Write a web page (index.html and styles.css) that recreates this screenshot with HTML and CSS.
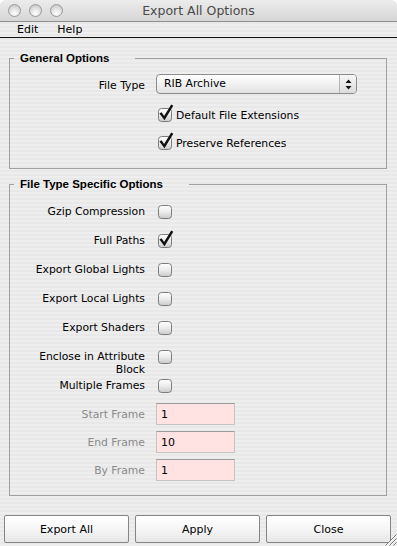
FILE: index.html
```html
<!DOCTYPE html>
<html lang="en">
<head>
    <meta charset="UTF-8">
    <meta name="viewport" content="width=device-width, initial-scale=1.0">
    <title>Export All Options</title>
    <link rel="stylesheet" href="styles.css">
</head>
<body>
<div class="window">
    <!-- Barre de titre -->
    <div class="titlebar">
        <div class="lights">
            <span class="light"></span>
            <span class="light"></span>
            <span class="light"></span>
        </div>
        <div class="title">Export All Options</div>
    </div>

    <!-- Menu -->
    <div class="menubar">
        <span>Edit</span>
        <span>Help</span>
    </div>

    <!-- Options generales -->
    <fieldset class="group group-general">
        <legend>General Options</legend>
        <div class="row row-select">
            <span class="row-label">File Type</span>
            <div class="select">
                <span class="select-text">RIB Archive</span>
                <span class="select-arrows">
                    <svg width="7" height="11" viewBox="0 0 7 11"><path d="M3.5 0.5 L6.5 4 L0.5 4 Z M0.5 7 L6.5 7 L3.5 10.5 Z" fill="#111"/></svg>
                </span>
            </div>
        </div>
        <div class="row row-check">
            <span class="row-label"></span>
            <svg class="check" width="17" height="19" viewBox="0 0 17 19">
                <defs>
                    <linearGradient id="boxfill" x1="0" y1="0" x2="0" y2="1">
                        <stop offset="0" stop-color="#ffffff"/>
                        <stop offset="0.5" stop-color="#ececec"/>
                        <stop offset="1" stop-color="#c9c9c9"/>
                    </linearGradient>
                </defs>
                <rect x="1.5" y="4.5" width="13" height="13" rx="3" fill="url(#boxfill)" stroke="#7d7d7d"/>
                <path d="M2.4 9.6 L4.6 8.2 L7.1 12.1 L14.2 0.5 L16.3 1.8 L7.5 16.2 Z" fill="#111"/>
            </svg>
            <span class="check-text">Default File Extensions</span>
        </div>
        <div class="row row-check">
            <span class="row-label"></span>
            <svg class="check" width="17" height="19" viewBox="0 0 17 19">
                <rect x="1.5" y="4.5" width="13" height="13" rx="3" fill="url(#boxfill)" stroke="#7d7d7d"/>
                <path d="M2.4 9.6 L4.6 8.2 L7.1 12.1 L14.2 0.5 L16.3 1.8 L7.5 16.2 Z" fill="#111"/>
            </svg>
            <span class="check-text">Preserve References</span>
        </div>
    </fieldset>

    <!-- Options specifiques au type de fichier -->
    <fieldset class="group group-specific">
        <legend>File Type Specific Options</legend>
        <div class="row row-opt">
            <span class="row-label">Gzip Compression</span>
            <svg class="check" width="17" height="19" viewBox="0 0 17 19">
                <rect x="1.5" y="4.5" width="13" height="13" rx="3" fill="url(#boxfill)" stroke="#7d7d7d"/>
            </svg>
        </div>
        <div class="row row-opt">
            <span class="row-label">Full Paths</span>
            <svg class="check" width="17" height="19" viewBox="0 0 17 19">
                <rect x="1.5" y="4.5" width="13" height="13" rx="3" fill="url(#boxfill)" stroke="#7d7d7d"/>
                <path d="M2.4 9.6 L4.6 8.2 L7.1 12.1 L14.2 0.5 L16.3 1.8 L7.5 16.2 Z" fill="#111"/>
            </svg>
        </div>
        <div class="row row-opt">
            <span class="row-label">Export Global Lights</span>
            <svg class="check" width="17" height="19" viewBox="0 0 17 19">
                <rect x="1.5" y="4.5" width="13" height="13" rx="3" fill="url(#boxfill)" stroke="#7d7d7d"/>
            </svg>
        </div>
        <div class="row row-opt">
            <span class="row-label">Export Local Lights</span>
            <svg class="check" width="17" height="19" viewBox="0 0 17 19">
                <rect x="1.5" y="4.5" width="13" height="13" rx="3" fill="url(#boxfill)" stroke="#7d7d7d"/>
            </svg>
        </div>
        <div class="row row-opt">
            <span class="row-label">Export Shaders</span>
            <svg class="check" width="17" height="19" viewBox="0 0 17 19">
                <rect x="1.5" y="4.5" width="13" height="13" rx="3" fill="url(#boxfill)" stroke="#7d7d7d"/>
            </svg>
        </div>
        <div class="row row-opt">
            <span class="row-label">Enclose in Attribute<br>Block</span>
            <svg class="check" width="17" height="19" viewBox="0 0 17 19">
                <rect x="1.5" y="4.5" width="13" height="13" rx="3" fill="url(#boxfill)" stroke="#7d7d7d"/>
            </svg>
        </div>
        <div class="row row-opt">
            <span class="row-label">Multiple Frames</span>
            <svg class="check" width="17" height="19" viewBox="0 0 17 19">
                <rect x="1.5" y="4.5" width="13" height="13" rx="3" fill="url(#boxfill)" stroke="#7d7d7d"/>
            </svg>
        </div>
        <div class="row row-field">
            <span class="row-label disabled">Start Frame</span>
            <input class="field" type="text" value="1">
        </div>
        <div class="row row-field">
            <span class="row-label disabled">End Frame</span>
            <input class="field" type="text" value="10">
        </div>
        <div class="row row-field">
            <span class="row-label disabled">By Frame</span>
            <input class="field" type="text" value="1">
        </div>
    </fieldset>

    <!-- Boutons -->
    <div class="buttons">
        <button class="btn">Export All</button>
        <button class="btn">Apply</button>
        <button class="btn">Close</button>
    </div>

    <svg class="grip" width="13" height="13" viewBox="0 0 13 13">
        <path d="M12.5 1.5 L1.5 12.5 M12.5 5.5 L5.5 12.5 M12.5 9.5 L9.5 12.5" stroke="#7a7a7a" stroke-width="1"/>
        <path d="M12.5 2.5 L2.5 12.5 M12.5 6.5 L6.5 12.5 M12.5 10.5 L10.5 12.5" stroke="#ffffff" stroke-width="1"/>
    </svg>
</div>
</body>
</html>
```

FILE: styles.css
```css
/* Styles generaux */
body {
    margin: 0;
    font-family: "DejaVu Sans", sans-serif;
    font-size: 10.8px;
    color: #000;
    background-color: #fff;
}

.window {
    position: relative;
    width: 397px;
    height: 546px;
    overflow: hidden;
    border-radius: 6px 6px 0 0;
    background: repeating-linear-gradient(#eeeeee 0 2px, #e8e8e8 2px 4px);
}

/* Barre de titre */
.titlebar {
    display: flex;
    align-items: center;
    height: 21px;
    border-bottom: 1px solid #8f8f8f;
    background: linear-gradient(#ececec, #d6d6d6);
}

.lights {
    display: flex;
    gap: 8px;
    width: 70px;
    padding-left: 8px;
    box-sizing: border-box;
}

.light {
    width: 13px;
    height: 13px;
    border-radius: 50%;
    box-sizing: border-box;
    border: 1px solid #9a9a9a;
    background: radial-gradient(circle at 50% 75%, #ffffff 0, #e4e4e4 45%, #bdbdbd 100%);
}

.title {
    flex: 1;
    margin-right: 70px;
    text-align: center;
    font-size: 12.5px;
    color: #4a4a4a;
}

/* Menu */
.menubar {
    display: flex;
    gap: 19px;
    height: 15px;
    line-height: 16px;
    padding-left: 17px;
    font-size: 11px;
    border-bottom: 1px solid #111;
}

/* Cadres */
.group {
    margin: 13px 10px 0 9px;
    padding: 9px 0 11px 0;
    border: 1px solid #a0a0a0;
    min-width: 0;
}

.group legend {
    margin-left: 4px;
    padding: 0 26px 0 6px;
    height: 14px;
    line-height: 14px;
    font-family: "Liberation Sans", sans-serif;
    font-weight: bold;
    font-size: 11.5px;
}

.group-specific {
    margin-top: 8px;
    padding-top: 6px;
}

.row {
    display: flex;
}

.row-label {
    width: 135px;
    flex-shrink: 0;
    text-align: right;
    white-space: nowrap;
    line-height: 13px;
}

.row-label.disabled {
    color: #8a8a8a;
}

/* Ligne du menu deroulant */
.row-select {
    height: 20px;
    align-items: center;
    margin-bottom: 7px;
}

.row-select .row-label {
    padding-top: 3px;
}

.select {
    display: flex;
    width: 201px;
    height: 20px;
    margin-left: 11px;
    box-sizing: border-box;
    border: 1px solid #8c8c8c;
    border-radius: 4px;
    background: linear-gradient(#ffffff, #f1f1f1 50%, #e2e2e2);
    overflow: hidden;
}

.select-text {
    flex: 1;
    padding-left: 7px;
    line-height: 18px;
}

.select-arrows {
    display: flex;
    align-items: center;
    justify-content: center;
    width: 16px;
    border-left: 1px solid #b5b5b5;
    background: linear-gradient(#f7f7f7, #dcdcdc);
}

/* Cases a cocher */
.check {
    flex-shrink: 0;
    margin-left: 12px;
}

.row-check {
    height: 28px;
    align-items: flex-start;
}

.row-check .check {
    margin-top: 3px;
}

.check-text {
    margin-left: 2px;
    padding-top: 7.5px;
    line-height: 13px;
}

.row-opt {
    height: 29px;
    align-items: flex-start;
}

.row-opt .row-label {
    padding-top: 8px;
}

.row-opt .check {
    margin-top: 3.5px;
}

/* Champs de texte */
.row-field {
    height: 28px;
    align-items: center;
}

.field {
    width: 79px;
    height: 22px;
    margin: 0 0 0 11px;
    padding: 0 0 0 4px;
    box-sizing: border-box;
    border: 1px solid #c4c4c4;
    border-top-color: #9c9c9c;
    background-color: #ffe3e3;
    font-family: "DejaVu Sans", sans-serif;
    font-size: 11px;
    color: #000;
    outline: none;
}

/* Boutons */
.buttons {
    display: flex;
    gap: 6px;
    margin-top: 19px;
    padding: 0 6px 0 4px;
}

.btn {
    flex: 1;
    height: 28px;
    border: 1px solid #858585;
    border-radius: 2px;
    background: linear-gradient(#ffffff, #f6f6f6 50%, #e6e6e6);
    font-family: "DejaVu Sans", sans-serif;
    font-size: 11px;
    color: #000;
    padding: 0;
}

.grip {
    position: absolute;
    right: 0;
    bottom: 0;
}
```
